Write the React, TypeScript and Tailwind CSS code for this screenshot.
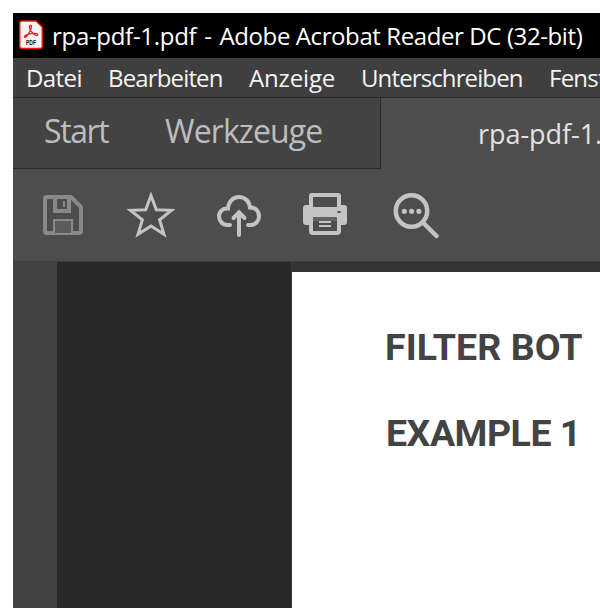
import type { ReactNode } from 'react';

function PdfIcon() {
  return (
    <svg width="24" height="30" viewBox="0 0 24 30" fill="none">
      <path d="M3 1H17L23.2 7V26.5Q23.2 28.5 21 28.5H3Q.8 28.5 .8 26.5V3Q.8 1 3 1Z" fill="#f5f5f5" stroke="#f3170c" strokeWidth="1.3" />
      <path d="M11.6 5.5C9.4 5.8 10.6 9 12.3 11.5C14 14 18.8 17.2 18.8 14.6C18.8 12.6 11 13 7 15C4.4 16.3 5 18.3 7 16.9C10 14.8 14.3 5.2 11.6 5.5Z" stroke="#ed2224" strokeWidth="1.3" />
      <text x="7" y="25" textLength="10" lengthAdjust="spacingAndGlyphs" fontFamily="Liberation Sans, sans-serif" fontSize="6.5" fontWeight="700" fill="#111">PDF</text>
    </svg>
  );
}

function SaveIcon() {
  return (
    <svg width="40" height="40" viewBox="0 0 40 40" fill="none" stroke="#898989">
      <path d="M4 2H28L38 12V36Q38 38 36 38H4Q2 38 2 36V4Q2 2 4 2Z" strokeWidth="4" />
      <path d="M12 3V16H26V3" strokeWidth="4" />
      <path d="M11 38V25H29V38" fill="#5c5c5c" strokeWidth="2" />
      <path d="M21 6V12" strokeWidth="2" />
    </svg>
  );
}

function StarIcon() {
  return (
    <svg width="48" height="48" viewBox="0 0 48 48" fill="none">
      <path d="M24 4.5L29.3 18.8L44.5 19.3L32.6 28.8L37 43.3L24 35L11 43.3L15.4 28.8L3.5 19.3L18.7 18.8Z" stroke="#c4c4c4" strokeWidth="3" />
    </svg>
  );
}

function CloudIcon() {
  return (
    <svg width="44" height="44" viewBox="0 0 44 44" fill="none" stroke="#c4c4c4" strokeWidth="4" strokeLinecap="round">
      <path d="M13 31H10.5C5.5 31 2 27 2 22.3C2 17.5 5.8 14 11 14.5C11.5 7.5 16 3 22 3C28 3 32.5 7.5 33 13.5C38.5 13.3 42 17.3 42 22.2C42 27 38.5 31 33.5 31H31" />
      <path d="M22 41V19M16.5 24L22 18.3L27.5 24" />
    </svg>
  );
}

function PrinterIcon() {
  return (
    <svg width="44" height="44" viewBox="0 0 44 44" fill="none">
      <rect x="8" y="3" width="28" height="20" rx="1" stroke="#c4c4c4" strokeWidth="4" />
      <path d="M3 13H6V15H38V13H41Q44 13 44 16V30Q44 33 41 33H3Q0 33 0 30V16Q0 13 3 13Z" fill="#c4c4c4" />
      <path d="M8 25H36V39Q36 41 34 41H10Q8 41 8 39Z" fill="#4d4d4d" stroke="#c4c4c4" strokeWidth="4" />
      <path d="M10 25H34V29H10Z" fill="#626262" />
      <path d="M16 30H28M16 34H28" stroke="#c4c4c4" strokeWidth="2" />
      <rect x="34.5" y="19" width="3" height="2" fill="#4d4d4d" />
    </svg>
  );
}

function SearchIcon() {
  return (
    <svg width="46" height="46" viewBox="0 0 46 46" fill="none">
      <circle cx="18.5" cy="18" r="15.7" stroke="#c4c4c4" strokeWidth="4.5" />
      <path d="M30 29.5L43.5 43" stroke="#c4c4c4" strokeWidth="4.5" strokeLinecap="round" />
      <circle cx="11.3" cy="18.3" r="2.6" fill="#c4c4c4" />
      <circle cx="18.6" cy="18.3" r="2.6" fill="#c4c4c4" />
      <circle cx="25.9" cy="18.3" r="2.6" fill="#c4c4c4" />
    </svg>
  );
}

function Tool({ label, className, children }: { label: string; className: string; children: ReactNode }) {
  return <button aria-label={label} className={`shrink-0 ${className}`}>{children}</button>;
}

export default function App() {
  return (
    <div className="h-[608px] w-[600px] overflow-hidden bg-white pt-[13px] pl-[13px] font-['Open_Sans','Noto_Sans',sans-serif] whitespace-nowrap">
      <div className="flex h-full flex-col">
        <header className="flex h-[45px] shrink-0 bg-black pt-[7px] pl-[6px] text-white">
          <PdfIcon />
          <span className="-mt-px ml-[9px] text-[24px] leading-[34px] tracking-[-0.4px]">
            <span className="tracking-[-0.3px]">rpa-pdf-1.pdf</span>
            <span className="[word-spacing:2.1px]"> - </span>
            Adobe Acrobat Reader DC (32-bit)
          </span>
        </header>
        <nav className="flex h-[40px] shrink-0 overflow-hidden border-b border-[#2b2b2b] bg-[#3f3f3f] pt-[3px] pl-[13px] text-[24px] leading-[34px] text-[#f4f4f4]">
          <span className="w-[82px] shrink-0 tracking-[-0.6px]">Datei</span>
          <span className="w-[141px] shrink-0 tracking-[-0.85px]">Bearbeiten</span>
          <span className="w-[112px] shrink-0 tracking-[-0.15px]">Anzeige</span>
          <span className="w-[188px] shrink-0 tracking-[-0.88px]">Unterschreiben</span>
          <span className="tracking-[-0.75px]">Fenster</span>
        </nav>
        <div className="flex h-[71px] shrink-0 bg-[#4d4d4d]">
          <div className="flex w-[368px] shrink-0 border-r border-b border-[#2b2b2b] bg-[#434343] pt-[11px] pl-[31px] text-[32px] leading-[44px] text-[#bdbdbd]">
            <span className="w-[121px] tracking-[-1.4px]">Start</span>
            <span className="tracking-[-0.9px]">Werkzeuge</span>
          </div>
          <span className="pt-[18px] pl-[97px] text-[27px] leading-[36px] tracking-[-0.05px] text-[#e2e2e2]">rpa-pdf-1.pdf</span>
        </div>
        <div className="flex h-[93px] shrink-0 items-start border-b border-[#3d3d3d] bg-[#4d4d4d] pl-[30px]">
          <Tool label="Speichern" className="mt-[26px]"><SaveIcon /></Tool>
          <Tool label="Favorit" className="mt-[22px] ml-[44px]"><StarIcon /></Tool>
          <Tool label="Hochladen" className="mt-[25px] ml-[42px]"><CloudIcon /></Tool>
          <Tool label="Drucken" className="mt-[23px] ml-[42px]"><PrinterIcon /></Tool>
          <Tool label="Suchen" className="mt-[24px] ml-[46px]"><SearchIcon /></Tool>
        </div>
        <main className="flex grow">
          <aside className="w-[44px] shrink-0 bg-[#434343]" />
          <div className="w-[235px] shrink-0 border-r border-[#3a3a3a] bg-[#282828]" />
          <div className="grow bg-[#333333] pt-[10px]">
            <article className="h-full bg-white pt-[50px] pl-[93px] font-['Roboto',sans-serif] text-[37.5px] leading-[50px] font-bold text-[#434343]">
              <h1 className="mb-[36px] tracking-[0.05px]">FILTER BOT</h1>
              <h2 className="pl-px tracking-[-0.5px]">EXAMPLE 1</h2>
            </article>
          </div>
        </main>
      </div>
    </div>
  );
}
